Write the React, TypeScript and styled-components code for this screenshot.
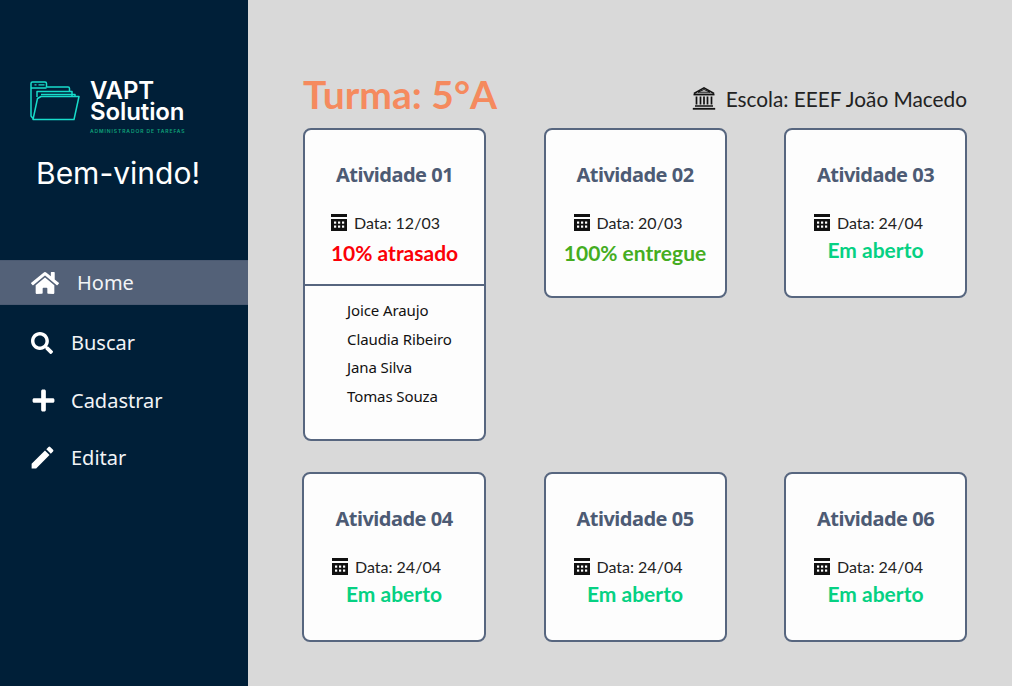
import React from 'react';
import styled, { createGlobalStyle } from 'styled-components';
import { FaHome, FaSearch, FaPlus } from 'react-icons/fa';
import { MdEdit } from 'react-icons/md';

const GlobalStyle = createGlobalStyle`
  html, body {
    margin: 0;
    padding: 0;
    background-color: #d9d9d9;
  }
  * {
    box-sizing: border-box;
  }
`;

interface Activity {
  title: string;
  date: string;
  status: string;
  tone: 'late' | 'done' | 'open';
  students?: string[];
}

const activities: Activity[] = [
  { title: 'Atividade 01', date: '12/03', status: '10% atrasado', tone: 'late', students: ['Joice Araujo', 'Claudia Ribeiro', 'Jana Silva', 'Tomas Souza'] },
  { title: 'Atividade 02', date: '20/03', status: '100% entregue', tone: 'done' },
  { title: 'Atividade 03', date: '24/04', status: 'Em aberto', tone: 'open' },
  { title: 'Atividade 04', date: '24/04', status: 'Em aberto', tone: 'open' },
  { title: 'Atividade 05', date: '24/04', status: 'Em aberto', tone: 'open' },
  { title: 'Atividade 06', date: '24/04', status: 'Em aberto', tone: 'open' },
];

const toneColors = { late: '#fb0007', done: '#45ad1f', open: '#06d183' };

const FolderLogo = () => (
  <svg width="50" height="40" viewBox="0 0 50 40" fill="none" stroke="#17dcca" strokeWidth="1.500" strokeLinejoin="round">
    <path d="M3 37.500 1 35V2.500Q1 1 2.500 1H15q1.500 0 1.500 1.500V6H38q1.500 0 1.500 1.500V10" />
    <path d="M1 7h15.500" />
    <path d="M4.500 3.800h2M8.500 3.800h6" strokeWidth="1.200" />
    <path d="M7 16v-5.500h35V16" />
    <path d="M11 13.500h34V16" />
    <path d="M3 38.500 7.500 17.500 11 15.500H49L44 38.500Z" />
  </svg>
);

const CalendarIcon = () => (
  <svg width="16" height="17" viewBox="0 0 16 17">
    <rect x="0" y="0" width="16" height="3" fill="#111" />
    <rect x="0" y="5" width="16" height="12" fill="#111" />
    <g fill="#fff">
      <rect x="3" y="7.500" width="2.200" height="2.200" />
      <rect x="7" y="7.500" width="2.200" height="2.200" />
      <rect x="11" y="7.500" width="2.200" height="2.200" />
      <rect x="3" y="11.500" width="2.200" height="2.200" />
      <rect x="7" y="11.500" width="2.200" height="2.200" />
      <rect x="11" y="11.500" width="2.200" height="2.200" />
    </g>
  </svg>
);

const BankIcon = () => (
  <svg width="24" height="24" viewBox="0 0 24 24" fill="none" stroke="#111" strokeWidth="1.500">
    <path d="M2 7.500 12 1.800l10 5.700" />
    <path d="M6 6.200 12 3.500l6 2.700z" strokeWidth="1" />
    <path d="M1.500 8.500h21" strokeWidth="1.800" />
    <path d="M4.500 10.500v8M8.500 10.500v8M12 10.500v8M15.500 10.500v8M19.500 10.500v8" strokeWidth="1.700" />
    <path d="M3 20h18" />
    <path d="M.8 22.800h22.400" strokeWidth="1.800" />
  </svg>
);

const ActivityCard = ({ activity }: { activity: Activity }) => (
  <Card>
    <CardSummary>
      <CardTitle>{activity.title}</CardTitle>
      <DateRow $expanded={!!activity.students}>
        <CalendarIcon />
        <DateText>Data: {activity.date}</DateText>
      </DateRow>
      <Status $tone={activity.tone}>{activity.status}</Status>
    </CardSummary>
    {activity.students && (
      <StudentList>
        {activity.students.map((name) => (
          <Student key={name}>{name}</Student>
        ))}
      </StudentList>
    )}
  </Card>
);

export default function App() {
  return (
    <Page>
      <GlobalStyle />
      <Sidebar>
        <Logo>
          <FolderLogo />
          <LogoText>
            <LogoName>VAPT<br />Solution</LogoName>
            <LogoTagline>ADMINISTRADOR DE TAREFAS</LogoTagline>
          </LogoText>
        </Logo>
        <Welcome>Bem-vindo!</Welcome>
        <Nav>
          <ActiveNavItem>
            <FaHome size={28} />
            <NavLabel>Home</NavLabel>
          </ActiveNavItem>
          <NavItem>
            <NavIcon><FaSearch size={22} /></NavIcon>
            <NavLabel>Buscar</NavLabel>
          </NavItem>
          <NavItem>
            <NavIcon><FaPlus size={25} /></NavIcon>
            <NavLabel>Cadastrar</NavLabel>
          </NavItem>
          <NavItem>
            <PencilIcon><MdEdit size={29} /></PencilIcon>
            <NavLabel>Editar</NavLabel>
          </NavItem>
        </Nav>
      </Sidebar>
      <Main>
        <Header>
          <ClassTitle>Turma: 5°A</ClassTitle>
          <School>
            <BankIcon />
            <SchoolName>Escola: EEEF João Macedo</SchoolName>
          </School>
        </Header>
        <Grid>
          {activities.map((activity) => (
            <ActivityCard key={activity.title} activity={activity} />
          ))}
        </Grid>
      </Main>
    </Page>
  );
}

const Page = styled.div`
  width: 1012px;
  height: 686px;
  display: flex;
  overflow: hidden;
  background-color: #d9d9d9;
`;

const Sidebar = styled.aside`
  width: 248px;
  flex-shrink: 0;
  background-color: #001f38;
  padding-top: 80px;
  display: flex;
  flex-direction: column;
`;

const Logo = styled.div`
  display: flex;
  align-items: flex-start;
  gap: 10px;
  padding-left: 30px;
  height: 54px;
  svg {
    margin-top: 1px;
  }
`;

const LogoText = styled.div`
  display: flex;
  flex-direction: column;
`;

const LogoName = styled.div`
  color: #fff;
  font-family: Inter, sans-serif;
  font-weight: 600;
  font-size: 24px;
  line-height: 21px;
  letter-spacing: -0.1px;
`;

const LogoTagline = styled.div`
  color: #0fa37a;
  font-family: Inter, sans-serif;
  font-weight: 600;
  font-size: 5px;
  letter-spacing: 0.9px;
  margin-top: 6px;
  white-space: nowrap;
`;

const Welcome = styled.h1`
  margin: 19px 0 0 36px;
  color: #fff;
  font-family: Inter, sans-serif;
  font-weight: 400;
  font-size: 30px;
  line-height: 40px;
`;

const Nav = styled.nav`
  margin-top: 67px;
  display: flex;
  flex-direction: column;
  color: #fff;
`;

const NavItem = styled.div`
  height: 57.500px;
  display: flex;
  align-items: center;
  padding-left: 31px;
`;

const NavIcon = styled.span`
  width: 40px;
  flex-shrink: 0;
  display: flex;
  align-items: center;
`;

const PencilIcon = styled(NavIcon)`
  margin-left: -3px;
  width: 43px;
`;

const ActiveNavItem = styled(NavItem)`
  height: 45px;
  background-color: #536178;
  border-top: 1px solid #4b5a72;
  border-bottom: 1px solid #4b5a72;
  gap: 18px;
  margin-bottom: 9px;
`;

const NavLabel = styled.span`
  font-family: "Noto Sans", sans-serif;
  font-size: 20px;
  color: #f2f4f6;
`;

const Main = styled.main`
  flex: 1;
  padding: 66px 45px 0 55px;
`;

const Header = styled.header`
  height: 56px;
  margin-bottom: 6px;
  display: flex;
  align-items: center;
  justify-content: space-between;
`;

const ClassTitle = styled.h2`
  margin: 0;
  color: #f58a5e;
  font-family: Lato, sans-serif;
  font-weight: 700;
  font-size: 39px;
  line-height: 48px;
`;

const School = styled.div`
  display: flex;
  align-items: center;
  gap: 10px;
  padding-top: 8px;
`;

const SchoolName = styled.span`
  color: #222;
  font-family: Lato, sans-serif;
  font-size: 20.800px;
`;

const Grid = styled.div`
  display: grid;
  grid-template-columns: repeat(3, 183px);
  grid-template-rows: 314px 170px;
  column-gap: 57.500px;
  row-gap: 30px;
  align-items: start;
`;

const Card = styled.article`
  background-color: #fdfdfd;
  border: 2px solid #57667f;
  border-radius: 8px;
  min-height: 170px;
  display: flex;
  flex-direction: column;
  &:nth-child(4) {
    margin-left: -1px;
  }
`;

const CardSummary = styled.div`
  padding-top: 31px;
  display: flex;
  flex-direction: column;
  align-items: center;
`;

const CardTitle = styled.h3`
  margin: 0;
  color: #4d5b74;
  font-family: "Noto Sans", sans-serif;
  font-weight: 700;
  font-size: 20px;
  line-height: 28px;
  letter-spacing: -0.5px;
`;

const DateRow = styled.div<{ $expanded: boolean }>`
  margin-top: 24px;
  align-self: flex-start;
  margin-left: ${(p) => (p.$expanded ? 26 : 28)}px;
  display: flex;
  align-items: center;
  gap: 7px;
`;

const DateText = styled.span`
  color: #222;
  font-family: Lato, sans-serif;
  font-size: 16px;
`;

const Status = styled.div<{ $tone: Activity['tone'] }>`
  margin-top: ${(p) => (p.$tone === 'open' ? 4 : 7)}px;
  color: ${(p) => toneColors[p.$tone]};
  font-family: Lato, sans-serif;
  font-weight: 700;
  font-size: 21px;
  line-height: 28px;
`;

const StudentList = styled.ul`
  margin: 17px 0 0;
  padding: 14px 0 33px 42px;
  list-style: none;
  border-top: 2px solid #57667f;
  display: flex;
  flex-direction: column;
  gap: 8px;
`;

const Student = styled.li`
  color: #111;
  font-family: "Noto Sans", sans-serif;
  font-size: 15px;
  line-height: 20.500px;
  letter-spacing: -0.1px;
`;
